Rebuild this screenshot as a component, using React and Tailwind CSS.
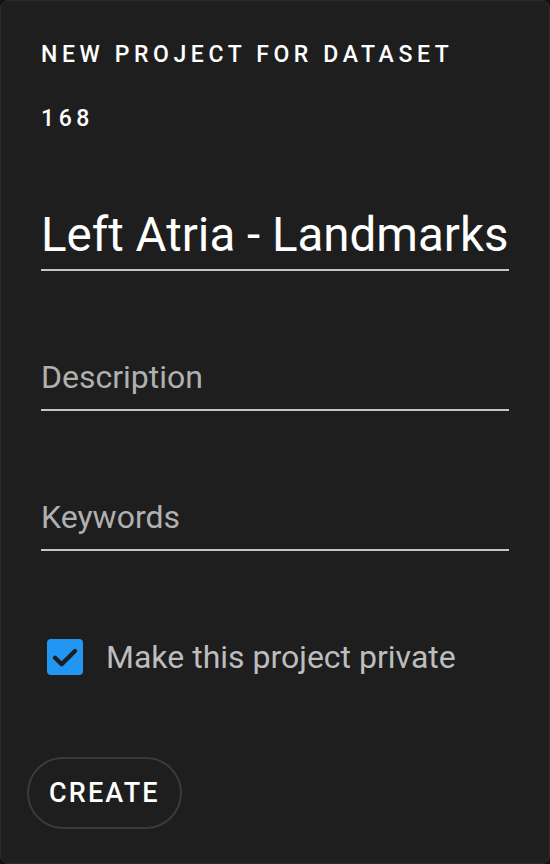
import React from "react";

const Field = ({ value, placeholder }) => (
  <div className="border-b-2 border-[#c4c4c4]">
    {value ? (
      <p className="text-[47.5px] leading-[60px] text-white pb-[4px] whitespace-nowrap">{value}</p>
    ) : (
      <p className="text-[32px] leading-[36px] text-[#b0b0b0] pb-[14px]">{placeholder}</p>
    )}
  </div>
);

const App = () => {
  return (
    <div
      className="w-[550px] h-[864px] bg-[#121212]"
      style={{ fontFamily: "Roboto, 'Liberation Sans', sans-serif" }}
    >
      <div className="h-full bg-[#1e1e1e] rounded-[8px] border border-[#2a2a2a] px-[40px] flex flex-col">
        <p className="mt-[39px] text-[23px] leading-[30px] font-medium tracking-[0.2em] text-white">
          NEW PROJECT FOR DATASET
        </p>
        <p className="mt-[34px] text-[23px] leading-[30px] font-medium tracking-[0.2em] text-white">
          168
        </p>

        <div className="mt-[71px]">
          <Field value="Left Atria - Landmarks" />
        </div>
        <div className="mt-[88px]">
          <Field placeholder="Description" />
        </div>
        <div className="mt-[88px]">
          <Field placeholder="Keywords" />
        </div>

        <label className="mt-[86px] flex items-center gap-[23px] pl-[6px]">
          <span className="w-[36px] h-[36px] rounded-[4px] bg-[#2196f3] flex items-center justify-center">
            <svg width="32" height="32" viewBox="0 0 24 24">
              <path
                d="M4.5 12.5 L9.5 17.5 L19.5 7.5"
                fill="none"
                stroke="#1e1e1e"
                strokeWidth="3.2"
                strokeLinecap="round"
                strokeLinejoin="round"
              />
            </svg>
          </span>
          <span className="text-[32px] leading-[40px] text-[#bdbdbd]">Make this project private</span>
        </label>

        <div className="mt-[80px] -ml-[14px]">
          <button className="h-[72px] px-[20px] rounded-full border-2 border-[#3a3a3a] text-white text-[27px] font-medium tracking-[0.08em]">
            CREATE
          </button>
        </div>
      </div>
    </div>
  );
};

export default App;
